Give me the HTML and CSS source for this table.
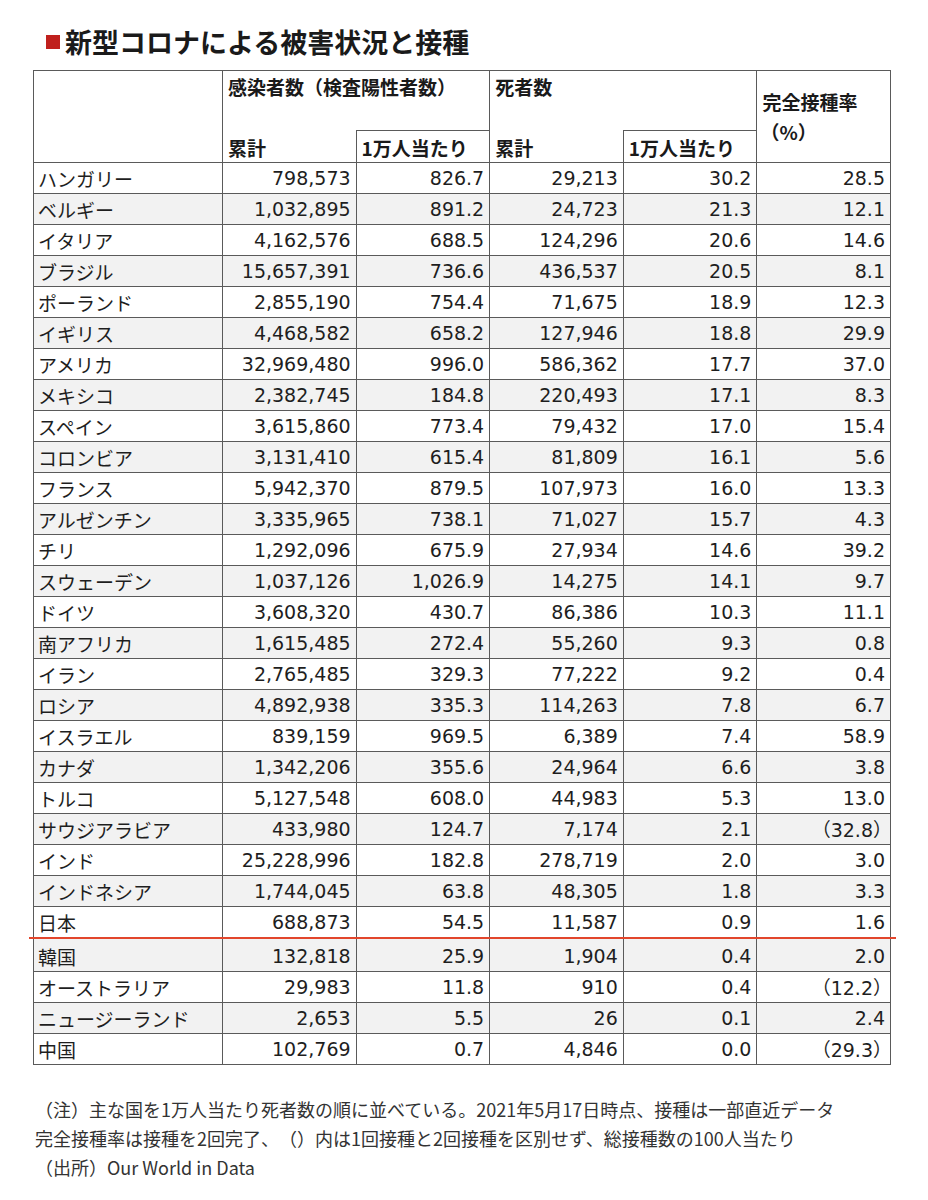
FILE: index.html
```html
<!DOCTYPE html>
<html lang="ja">
<head>
<meta charset="utf-8">
<link rel="stylesheet" href="styles.css">
</head>
<body>
<h1 class="title"><span class="mark"></span>新型コロナによる被害状況と接種</h1>
<table class="data">
  <colgroup>
    <col class="c-country"><col class="c-num"><col class="c-num"><col class="c-num"><col class="c-num"><col class="c-num">
  </colgroup>
  <thead>
    <tr class="h1">
      <th rowspan="2" class="blank"></th>
      <th colspan="2" class="group">感染者数（検査陽性者数）</th>
      <th colspan="2" class="group">死者数</th>
      <th rowspan="2" class="rate">完全接種率<br><span class="pct">（%）</span></th>
    </tr>
    <tr class="h2">
      <th class="sub">累計</th>
      <th class="sub box">1万人当たり</th>
      <th class="sub">累計</th>
      <th class="sub box">1万人当たり</th>
    </tr>
  </thead>
  <tbody>
    <tr><td>ハンガリー</td><td>798,573</td><td>826.7</td><td>29,213</td><td>30.2</td><td>28.5</td></tr>
    <tr><td>ベルギー</td><td>1,032,895</td><td>891.2</td><td>24,723</td><td>21.3</td><td>12.1</td></tr>
    <tr><td>イタリア</td><td>4,162,576</td><td>688.5</td><td>124,296</td><td>20.6</td><td>14.6</td></tr>
    <tr><td>ブラジル</td><td>15,657,391</td><td>736.6</td><td>436,537</td><td>20.5</td><td>8.1</td></tr>
    <tr><td>ポーランド</td><td>2,855,190</td><td>754.4</td><td>71,675</td><td>18.9</td><td>12.3</td></tr>
    <tr><td>イギリス</td><td>4,468,582</td><td>658.2</td><td>127,946</td><td>18.8</td><td>29.9</td></tr>
    <tr><td>アメリカ</td><td>32,969,480</td><td>996.0</td><td>586,362</td><td>17.7</td><td>37.0</td></tr>
    <tr><td>メキシコ</td><td>2,382,745</td><td>184.8</td><td>220,493</td><td>17.1</td><td>8.3</td></tr>
    <tr><td>スペイン</td><td>3,615,860</td><td>773.4</td><td>79,432</td><td>17.0</td><td>15.4</td></tr>
    <tr><td>コロンビア</td><td>3,131,410</td><td>615.4</td><td>81,809</td><td>16.1</td><td>5.6</td></tr>
    <tr><td>フランス</td><td>5,942,370</td><td>879.5</td><td>107,973</td><td>16.0</td><td>13.3</td></tr>
    <tr><td>アルゼンチン</td><td>3,335,965</td><td>738.1</td><td>71,027</td><td>15.7</td><td>4.3</td></tr>
    <tr><td>チリ</td><td>1,292,096</td><td>675.9</td><td>27,934</td><td>14.6</td><td>39.2</td></tr>
    <tr><td>スウェーデン</td><td>1,037,126</td><td>1,026.9</td><td>14,275</td><td>14.1</td><td>9.7</td></tr>
    <tr><td>ドイツ</td><td>3,608,320</td><td>430.7</td><td>86,386</td><td>10.3</td><td>11.1</td></tr>
    <tr><td>南アフリカ</td><td>1,615,485</td><td>272.4</td><td>55,260</td><td>9.3</td><td>0.8</td></tr>
    <tr><td>イラン</td><td>2,765,485</td><td>329.3</td><td>77,222</td><td>9.2</td><td>0.4</td></tr>
    <tr><td>ロシア</td><td>4,892,938</td><td>335.3</td><td>114,263</td><td>7.8</td><td>6.7</td></tr>
    <tr><td>イスラエル</td><td>839,159</td><td>969.5</td><td>6,389</td><td>7.4</td><td>58.9</td></tr>
    <tr><td>カナダ</td><td>1,342,206</td><td>355.6</td><td>24,964</td><td>6.6</td><td>3.8</td></tr>
    <tr><td>トルコ</td><td>5,127,548</td><td>608.0</td><td>44,983</td><td>5.3</td><td>13.0</td></tr>
    <tr><td>サウジアラビア</td><td>433,980</td><td>124.7</td><td>7,174</td><td>2.1</td><td><span class="po">（</span>32.8<span class="pc">）</span></td></tr>
    <tr><td>インド</td><td>25,228,996</td><td>182.8</td><td>278,719</td><td>2.0</td><td>3.0</td></tr>
    <tr><td>インドネシア</td><td>1,744,045</td><td>63.8</td><td>48,305</td><td>1.8</td><td>3.3</td></tr>
    <tr class="cut"><td>日本</td><td>688,873</td><td>54.5</td><td>11,587</td><td>0.9</td><td>1.6</td></tr>
    <tr class="after-cut"><td>韓国</td><td>132,818</td><td>25.9</td><td>1,904</td><td>0.4</td><td>2.0</td></tr>
    <tr><td>オーストラリア</td><td>29,983</td><td>11.8</td><td>910</td><td>0.4</td><td><span class="po">（</span>12.2<span class="pc">）</span></td></tr>
    <tr><td>ニュージーランド</td><td>2,653</td><td>5.5</td><td>26</td><td>0.1</td><td>2.4</td></tr>
    <tr><td>中国</td><td>102,769</td><td>0.7</td><td>4,846</td><td>0.0</td><td><span class="po">（</span>29.3<span class="pc">）</span></td></tr>
  </tbody>
</table>
<div class="notes">
  <p>（注）主な国を1万人当たり死者数の順に並べている。2021年5月17日時点、接種は一部直近データ</p>
  <p>完全接種率は接種を2回完了、（）内は1回接種と2回接種を区別せず、総接種数の100人当たり</p>
  <p>（出所）Our World in Data</p>
</div>
</body>
</html>
```

FILE: styles.css
```css
html, body {
  margin: 0;
  padding: 0;
  background: #ffffff;
}

body {
  font-family: "DejaVu Sans", "Noto Sans CJK JP", sans-serif;
  color: #1e1e1e;
  width: 928px;
  text-spacing-trim: space-all;
}

.title {
  margin: 0 0 0 46px;
  padding-top: 27px;
  font-family: "Noto Sans CJK JP", sans-serif;
  font-size: 27px;
  line-height: 30px;
  font-weight: 700;
  color: #1a1a1a;
  display: flex;
  align-items: center;
  gap: 5px;
}

.mark {
  display: inline-block;
  width: 14px;
  height: 14px;
  background: #c0201d;
}

.data {
  margin: 13px 0 0 33px;
  border-collapse: collapse;
  table-layout: fixed;
  width: 857px;
  font-size: 19px;
}

.c-country { width: 189px; }
.c-num { width: 133.6px; }

.data th,
.data td {
  border: 1px solid #5a5a5a;
  padding: 0 5px;
  line-height: 1;
  white-space: nowrap;
}

.data th {
  font-family: "Noto Sans CJK JP", sans-serif;
  font-weight: 700;
  font-size: 19px;
  text-align: left;
  color: #1a1a1a;
}

.h1 th { height: 60px; }
.h2 th { height: 29px; }

.group {
  vertical-align: top;
  height: 53px !important;
  padding-top: 6px !important;
  border-bottom: none !important;
}

.sub {
  border-top: none !important;
  vertical-align: middle;
  padding-top: 2px !important;
}

.sub.box {
  border-top: 1px solid #5a5a5a !important;
}

.rate {
  vertical-align: middle;
  line-height: 30px !important;
  padding-top: 0 !important;
}

.pct {
  margin-left: -2px;
}

.data tbody td {
  height: 29px;
  text-align: right;
  padding-top: 1px;
}

.data tbody td:first-child {
  text-align: left;
  font-family: "Noto Sans CJK JP", sans-serif;
  font-size: 19px;
  padding-left: 4px;
}

.data tbody tr:nth-child(even) td {
  background: #f2f2f2;
}

.po,
.pc {
  font-family: "Noto Sans CJK JP", sans-serif;
  font-size: 19px;
}

.po {
  margin-left: -7px;
}

.pc {
  margin-right: -7px;
}

.cut td:first-child {
  position: relative;
}

.cut td:first-child::after {
  content: "";
  position: absolute;
  left: -5px;
  bottom: -2px;
  width: 867px;
  height: 2px;
  background: #e2462c;
}

.after-cut td {
  height: 29px !important;
  padding-top: 4px !important;
}

.notes {
  margin: 30px 0 0 35px;
  font-family: "Noto Sans CJK JP", sans-serif;
  font-size: 18px;
  line-height: 29px;
  color: #333333;
}

.notes p {
  margin: 0;
}
```
